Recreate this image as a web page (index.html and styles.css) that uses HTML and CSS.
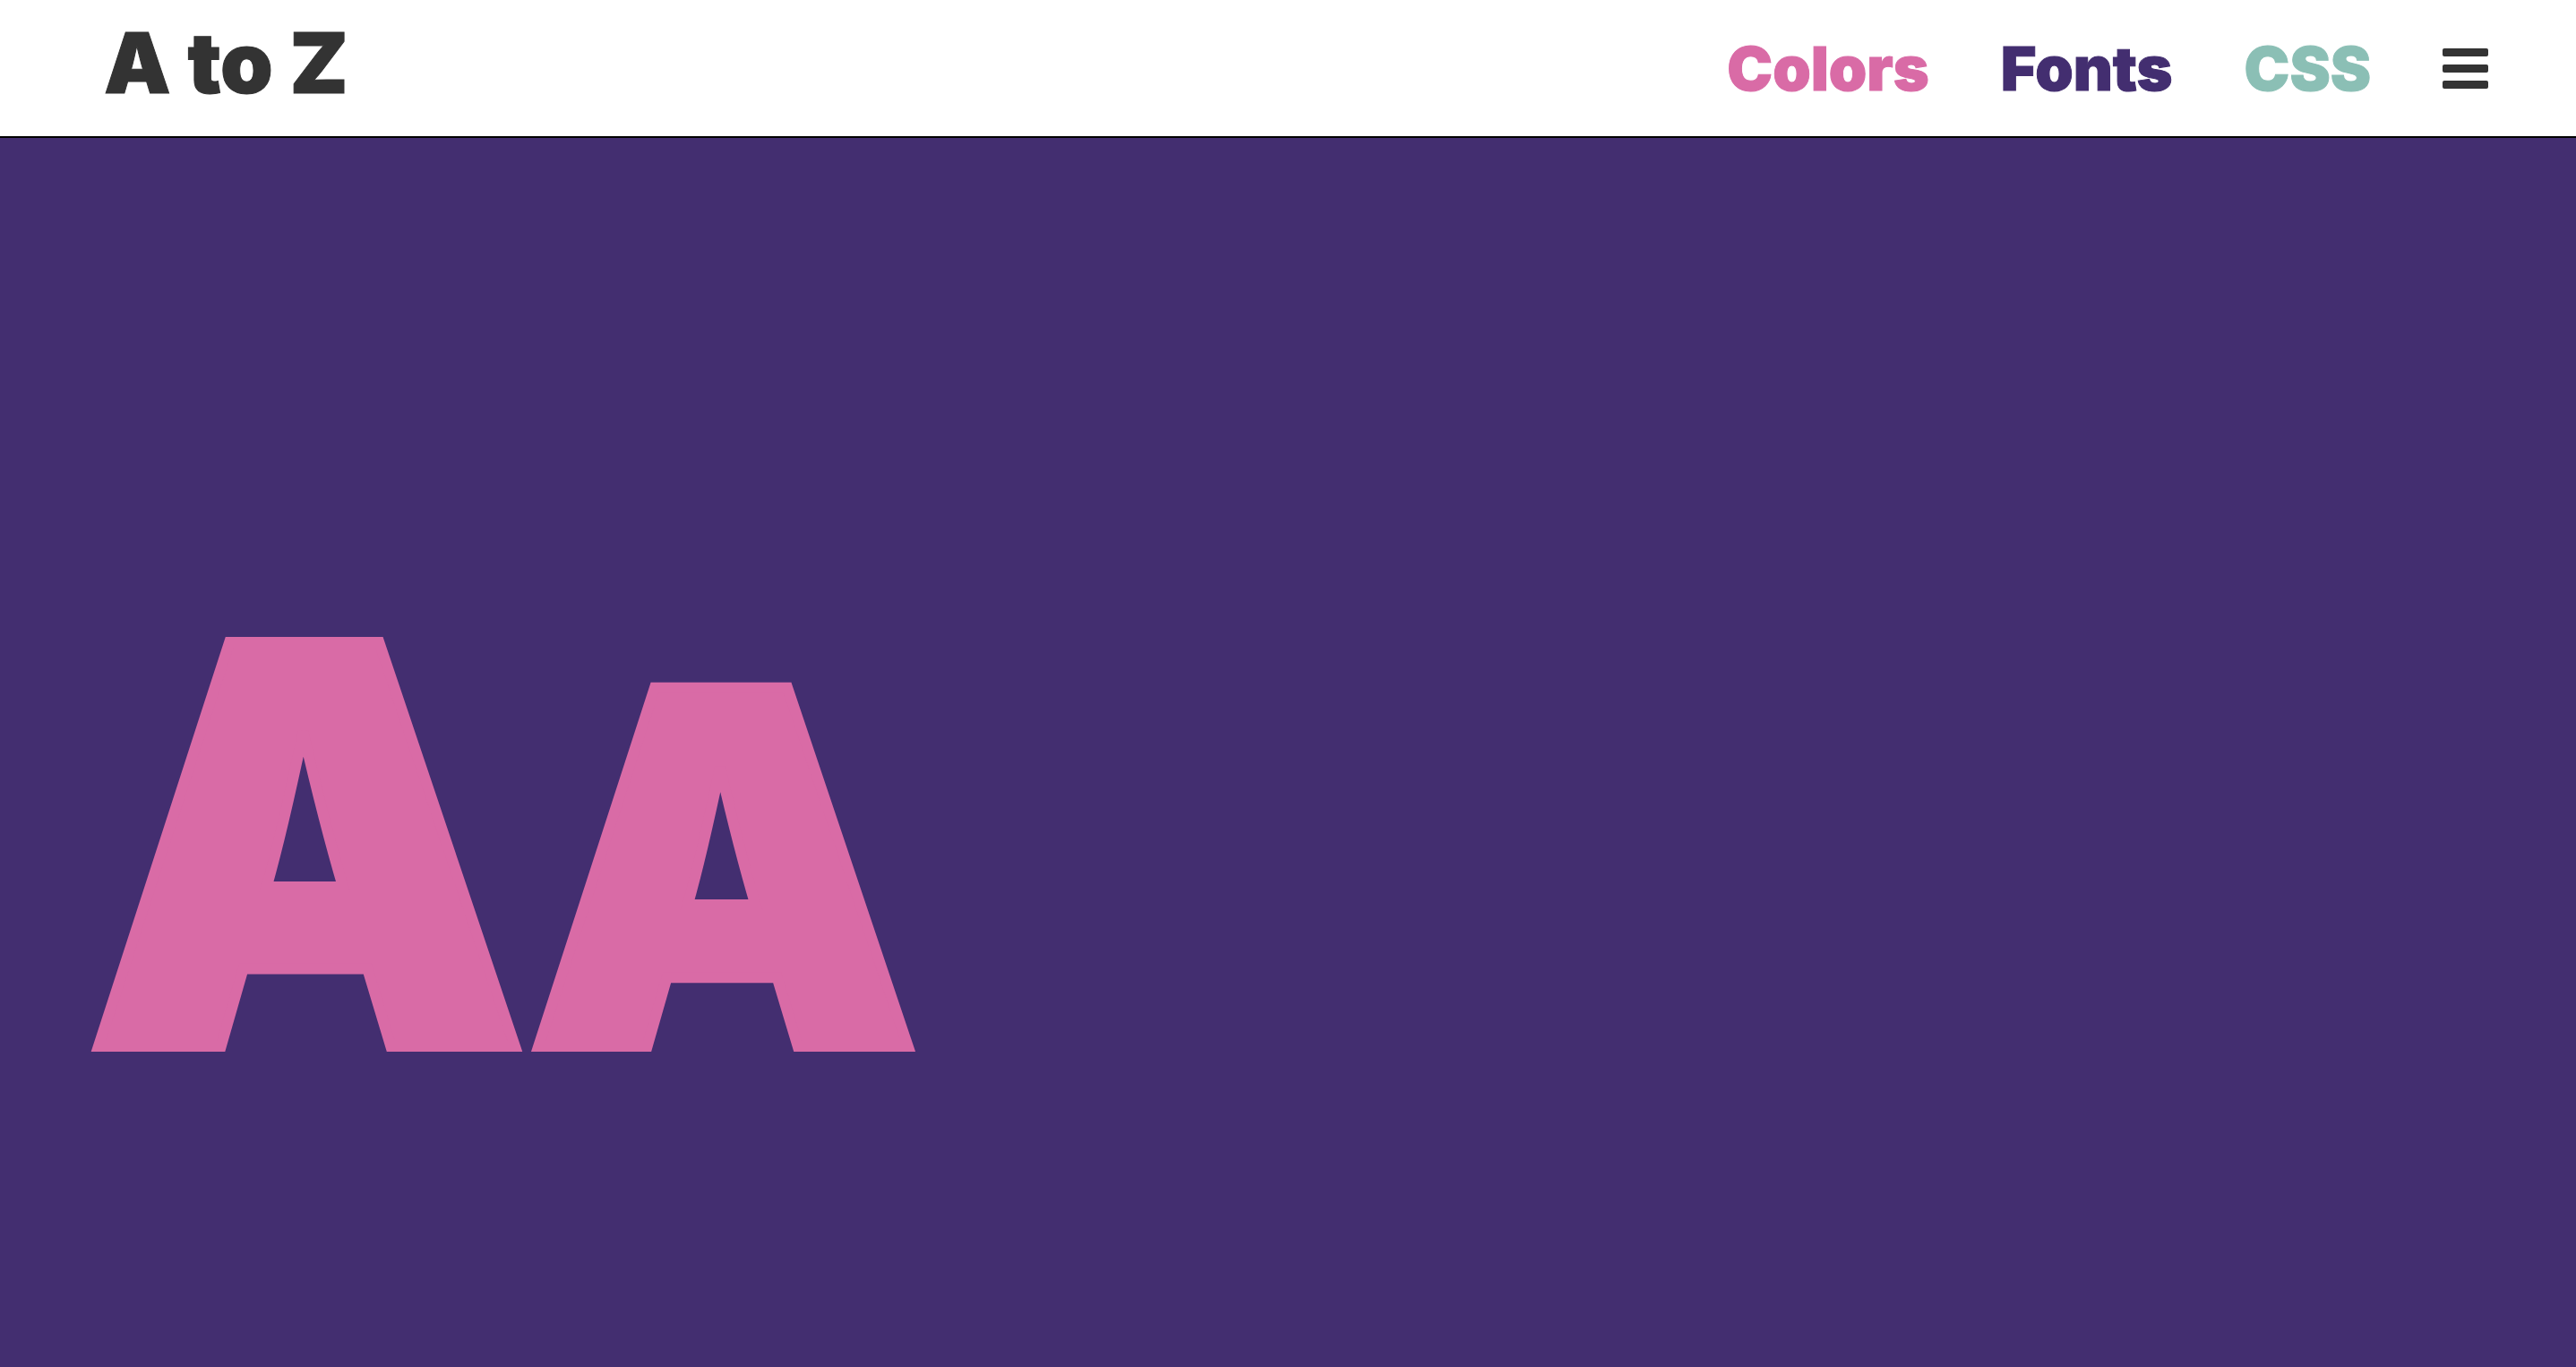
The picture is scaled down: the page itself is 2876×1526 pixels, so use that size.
FILE: index.html
```html
<!DOCTYPE html>
<html lang="en">
<head>
  <meta charset="utf-8">
  <meta name="viewport" content="width=device-width, initial-scale=1">
  <title>A to Z</title>
  <link rel="stylesheet" href="styles.css">
</head>
<body>
  <header class="site-header">
    <a class="logo" href="#">A to Z</a>
    <nav class="site-nav">
      <a class="nav-link nav-link-colors" href="#">Colors</a>
      <a class="nav-link nav-link-fonts" href="#">Fonts</a>
      <a class="nav-link nav-link-css" href="#">CSS</a>
      <button class="menu-button" type="button" aria-label="Menu">
        <svg class="menu-icon" viewBox="0 0 51 45" aria-hidden="true">
          <rect x="0" y="0" width="51" height="9" rx="2"/>
          <rect x="0" y="18" width="51" height="9" rx="2"/>
          <rect x="0" y="36" width="51" height="9" rx="2"/>
        </svg>
      </button>
    </nav>
  </header>
  <main class="hero">
    <h1 class="specimen">A<span class="specimen-small">A</span></h1>
  </main>
</body>
</html>
```
FILE: styles.css
```css
* {
  box-sizing: border-box;
}

body {
  display: flex;
  flex-direction: column;
  min-height: 100vh;
  margin: 0;
  background: #432e70;
  font-family: Inter, "Liberation Sans", sans-serif;
  font-weight: 900;
}

.site-header {
  display: flex;
  align-items: flex-start;
  justify-content: space-between;
  padding: 16px 98px 28px 116px;
  background: #fff;
  border-bottom: 2px solid #000;
}

.logo {
  color: #333;
  font-size: 94px;
  line-height: 108px;
  text-decoration: none;
  -webkit-text-stroke: 1px currentColor;
}

.site-nav {
  display: flex;
  align-items: center;
  gap: 80px;
  padding-top: 20px;
}

.nav-link {
  font-size: 68px;
  line-height: 80px;
  text-decoration: none;
  -webkit-text-stroke: 1px currentColor;
}

.nav-link-colors {
  color: #d96ba6;
}

.nav-link-fonts {
  color: #432e70;
}

.nav-link-css {
  color: #8bbfb5;
}

.menu-button {
  display: flex;
  padding: 0;
  border: 0;
  background: none;
  color: #333;
}

.menu-icon {
  width: 51px;
  height: 45px;
  fill: currentColor;
}

.hero {
  display: flex;
  flex: 1;
  align-items: center;
  padding: 206px 96px 0;
}

.specimen {
  margin: 0;
  color: #d96ba6;
  font-size: 620px;
  font-weight: 900;
  line-height: 1;
  -webkit-text-stroke: 12px currentColor;
}

.specimen-small {
  font-size: 550px;
}
```
